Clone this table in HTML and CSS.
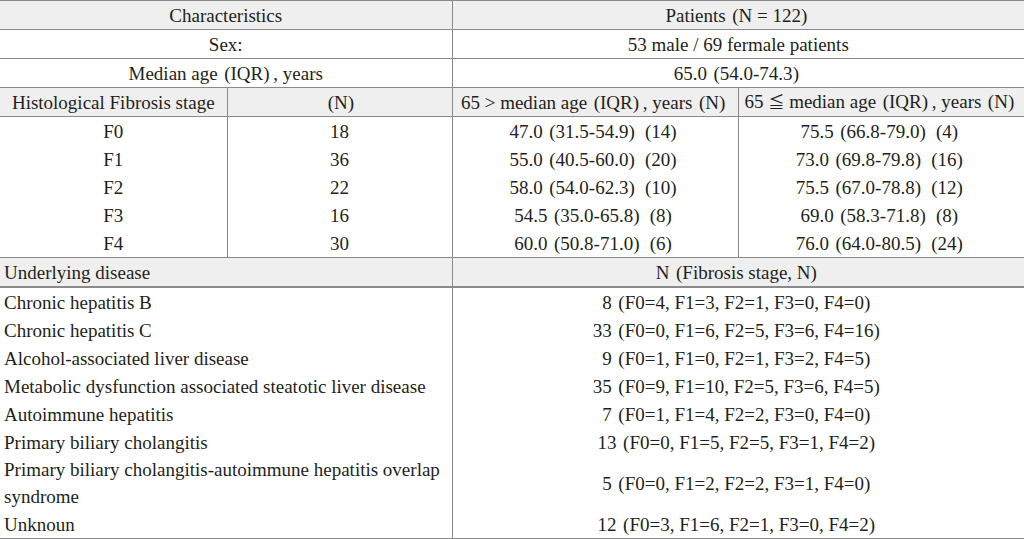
FILE: index.html
```html
<!DOCTYPE html>
<html lang="en">
<head>
<meta charset="utf-8">
<title>Patient characteristics</title>
<link rel="stylesheet" href="styles.css">
</head>
<body>
<table class="tbl">
  <colgroup>
    <col class="c1"><col class="c2"><col class="c3"><col class="c4">
  </colgroup>
  <tr class="top shade">
    <td colspan="2" class="ctr">Characteristics</td>
    <td colspan="2" class="ctr vl">Patients<span class="op">(</span>N = 122<span class="cp">)</span></td>
  </tr>
  <tr class="top">
    <td colspan="2" class="ctr">Sex:</td>
    <td colspan="2" class="ctr vl">53 male / 69 fermale patients</td>
  </tr>
  <tr class="top">
    <td colspan="2" class="ctr">Median age<span class="op">(</span>IQR<span class="cp">)</span>, years</td>
    <td colspan="2" class="ctr vl">65.0<span class="op">(</span>54.0-74.3<span class="cp">)</span></td>
  </tr>
  <tr class="top shade">
    <td class="ctr">Histological Fibrosis stage</td>
    <td class="ctr vl"><span class="op">(</span>N<span class="cp">)</span></td>
    <td class="ctr vl">65 &gt; median age<span class="op">(</span>IQR<span class="cp">)</span>, years<span class="op">(</span>N<span class="cp">)</span></td>
    <td class="ctr vl">65 <span class="sym">≦</span> median age<span class="op">(</span>IQR<span class="cp">)</span>, years<span class="op">(</span>N<span class="cp">)</span></td>
  </tr>
  <tr class="stage">
    <td class="ctr">F0</td><td class="ctr vl">18</td>
    <td class="ctr vl">47.0<span class="op">(</span>31.5-54.9<span class="cp">)</span><span class="op">(</span>14<span class="cp">)</span></td>
    <td class="ctr vl">75.5<span class="op">(</span>66.8-79.0<span class="cp">)</span><span class="op">(</span>4<span class="cp">)</span></td>
  </tr>
  <tr class="stage">
    <td class="ctr">F1</td><td class="ctr vl">36</td>
    <td class="ctr vl">55.0<span class="op">(</span>40.5-60.0<span class="cp">)</span><span class="op">(</span>20<span class="cp">)</span></td>
    <td class="ctr vl">73.0<span class="op">(</span>69.8-79.8<span class="cp">)</span><span class="op">(</span>16<span class="cp">)</span></td>
  </tr>
  <tr class="stage">
    <td class="ctr">F2</td><td class="ctr vl">22</td>
    <td class="ctr vl">58.0<span class="op">(</span>54.0-62.3<span class="cp">)</span><span class="op">(</span>10<span class="cp">)</span></td>
    <td class="ctr vl">75.5<span class="op">(</span>67.0-78.8<span class="cp">)</span><span class="op">(</span>12<span class="cp">)</span></td>
  </tr>
  <tr class="stage">
    <td class="ctr">F3</td><td class="ctr vl">16</td>
    <td class="ctr vl">54.5<span class="op">(</span>35.0-65.8<span class="cp">)</span><span class="op">(</span>8<span class="cp">)</span></td>
    <td class="ctr vl">69.0<span class="op">(</span>58.3-71.8<span class="cp">)</span><span class="op">(</span>8<span class="cp">)</span></td>
  </tr>
  <tr class="stage">
    <td class="ctr">F4</td><td class="ctr vl">30</td>
    <td class="ctr vl">60.0<span class="op">(</span>50.8-71.0<span class="cp">)</span><span class="op">(</span>6<span class="cp">)</span></td>
    <td class="ctr vl">76.0<span class="op">(</span>64.0-80.5<span class="cp">)</span><span class="op">(</span>24<span class="cp">)</span></td>
  </tr>
  <tr class="under shade">
    <td colspan="2" class="lft">Underlying disease</td>
    <td colspan="2" class="ctr vl">N<span class="op">(</span>Fibrosis stage, N<span class="cp">)</span></td>
  </tr>
  <tr class="dis">
    <td colspan="2" class="lft">Chronic hepatitis B</td>
    <td colspan="2" class="ctr vl">8<span class="op">(</span>F0=4, F1=3, F2=1, F3=0, F4=0<span class="cp">)</span></td>
  </tr>
  <tr class="dis">
    <td colspan="2" class="lft">Chronic hepatitis C</td>
    <td colspan="2" class="ctr vl">33<span class="op">(</span>F0=0, F1=6, F2=5, F3=6, F4=16<span class="cp">)</span></td>
  </tr>
  <tr class="dis">
    <td colspan="2" class="lft">Alcohol-associated liver disease</td>
    <td colspan="2" class="ctr vl">9<span class="op">(</span>F0=1, F1=0, F2=1, F3=2, F4=5<span class="cp">)</span></td>
  </tr>
  <tr class="dis">
    <td colspan="2" class="lft">Metabolic dysfunction associated steatotic liver disease</td>
    <td colspan="2" class="ctr vl">35<span class="op">(</span>F0=9, F1=10, F2=5, F3=6, F4=5<span class="cp">)</span></td>
  </tr>
  <tr class="dis">
    <td colspan="2" class="lft">Autoimmune hepatitis</td>
    <td colspan="2" class="ctr vl">7<span class="op">(</span>F0=1, F1=4, F2=2, F3=0, F4=0<span class="cp">)</span></td>
  </tr>
  <tr class="dis">
    <td colspan="2" class="lft">Primary biliary cholangitis</td>
    <td colspan="2" class="ctr vl">13<span class="op">(</span>F0=0, F1=5, F2=5, F3=1, F4=2<span class="cp">)</span></td>
  </tr>
  <tr class="dis">
    <td colspan="2" class="lft wrap">Primary biliary cholangitis-autoimmune hepatitis overlap syndrome</td>
    <td colspan="2" class="ctr vl">5<span class="op">(</span>F0=0, F1=2, F2=2, F3=1, F4=0<span class="cp">)</span></td>
  </tr>
  <tr class="dis">
    <td colspan="2" class="lft">Unknoun</td>
    <td colspan="2" class="ctr vl">12<span class="op">(</span>F0=3, F1=6, F2=1, F3=0, F4=2<span class="cp">)</span></td>
  </tr>
</table>
</body>
</html>
```

FILE: styles.css
```css
html, body {
  margin: 0;
  padding: 0;
  background: #ffffff;
}

body {
  font-family: "Liberation Serif", "Times New Roman", "DejaVu Serif", serif;
  font-size: 19px;
  color: #231f20;
}

.tbl {
  width: 1024px;
  border-collapse: collapse;
  table-layout: fixed;
  border-top: 1px solid #8a8a8a;
  border-bottom: 1px solid #8a8a8a;
}

.c1 { width: 227px; }
.c2 { width: 225px; }
.c3 { width: 286px; }
.c4 { width: 286px; }

.tbl td {
  padding: 0 4px;
  height: 28px;
  line-height: 27px;
  vertical-align: middle;
  white-space: nowrap;
}

.tbl td.wrap {
  white-space: normal;
  padding-right: 6px;
}

.ctr { text-align: center; }
.lft { text-align: left; }

.vl { border-left: 1px solid #8a8a8a; }

.top td { border-bottom: 1px solid #8a8a8a; }

.shade td { background: #efefef; }

.under td {
  border-top: 1px solid #8a8a8a;
  border-bottom: 2px solid #8a8a8a;
}

.op { padding-left: 0.34em; }
.cp { padding-right: 0.2em; }

.sym {
  font-family: "DejaVu Serif", "Noto Sans CJK JP", serif;
  font-size: 0.85em;
}
```
